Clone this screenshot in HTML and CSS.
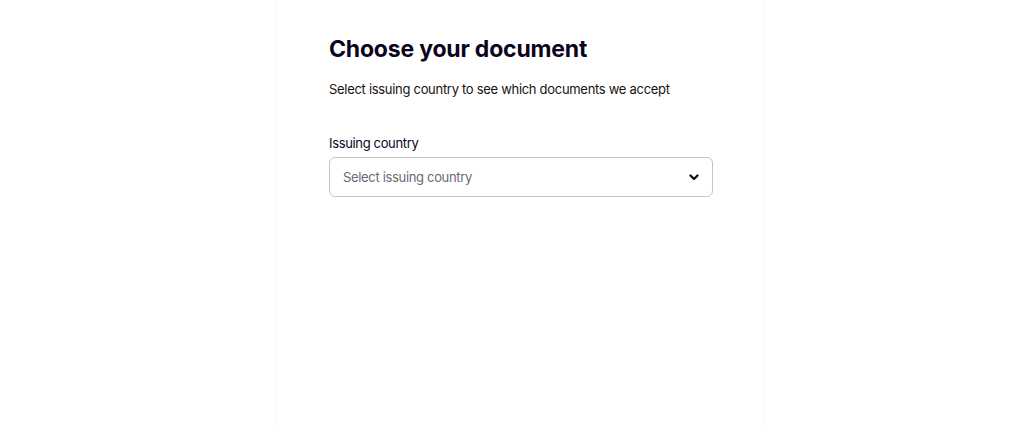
FILE: index.html
```html
<!DOCTYPE html>
<html>
<head>
    <title>Choose your document</title>
    <link rel="stylesheet" href="styles.css">
</head>
<body>
    <div class="page">
        <div class="panel">
            <h1 class="title">Choose your document</h1>
            <p class="subtitle">Select issuing country to see which documents we accept</p>
            <div class="field">
                <label class="field-label" for="country">Issuing country</label>
                <div class="select-box" id="country">
                    <span class="select-placeholder">Select issuing country</span>
                    <svg class="chevron" width="10" height="7" viewBox="0 0 10 7">
                        <path d="M1.5 1.5l3.5 3.5 3.5-3.5" fill="none" stroke="#0b051d" stroke-width="2.2" stroke-linecap="round" stroke-linejoin="round"/>
                    </svg>
                </div>
            </div>
        </div>
    </div>
</body>
</html>
```

FILE: styles.css
```css
html, body {
    margin: 0;
    height: 100%;
    background-color: #fff;
}

body {
    font-family: Inter, "Noto Sans", sans-serif;
    color: #0b051d;
}

.page {
    display: flex;
    height: 100%;
    padding-left: 276px;
}

.panel {
    width: 384px;
    padding: 33px 51px 0 52px;
    border-left: 1px solid #f5f5f5;
    border-right: 1px solid #f5f5f5;
}

.title {
    margin: 0;
    font-size: 23px;
    line-height: 32px;
    font-weight: 700;
    letter-spacing: -0.2px;
}

.subtitle {
    margin: 14px 0 0;
    font-size: 13px;
    line-height: 20px;
    letter-spacing: -0.3px;
    color: #17120f;
}

.field {
    margin-top: 34px;
}

.field-label {
    display: block;
    font-size: 13px;
    line-height: 20px;
    letter-spacing: -0.35px;
    margin-bottom: 4px;
}

.select-box {
    display: flex;
    align-items: center;
    justify-content: space-between;
    height: 38px;
    padding: 0 13px 0 13px;
    border: 1px solid #c4c4c4;
    border-radius: 6px;
}

.select-placeholder {
    font-size: 13px;
    letter-spacing: -0.33px;
    color: #6b6876;
}

.chevron {
    display: block;
}
```
